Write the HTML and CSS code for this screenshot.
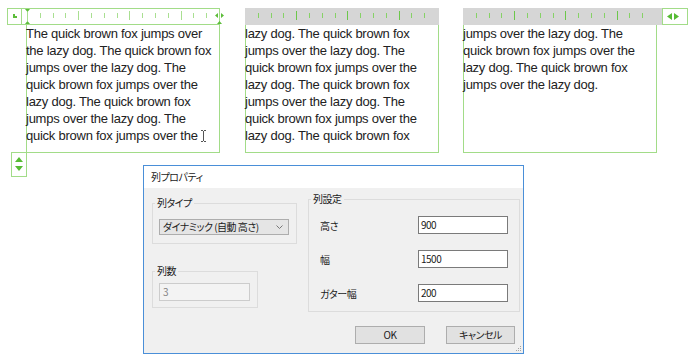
FILE: index.html
```html
<!DOCTYPE html>
<html lang="ja">
<head>
  <meta charset="UTF-8">
  <meta name="viewport" content="width=device-width, initial-scale=1.0">
  <title>列プロパティ</title>
  <link rel="stylesheet" href="styles.css">
</head>
<body>

<div class="frames">
  <div class="frame frame-first">
    <div class="ruler ruler-active">
      <div class="tab-corner"><span class="tab-mark"></span></div>
      <div class="scale">
        <svg class="ticks" width="197" height="15" viewBox="0 0 197 15">
          <g transform="translate(5 0)" stroke="#a9df91">
            <path d="M13.5 4v5M26.5 4v5M38.5 4v5M64.5 4v5M77.5 4v5M90.5 4v5M115.5 4v5M128.5 4v5M141.5 4v5M166.5 4v5M179.5 4v5"/>
            <path d="M51.5 2v9M102.5 2v9M154.5 2v9"/>
          </g>
        </svg>
        <svg class="indent-marker" width="5" height="15" viewBox="0 0 5 15">
          <path d="M0 0h5L2.5 3z M0 15h5L2.5 12z" fill="#5cbd3a"/>
          <path d="M2.5 3v9" stroke="#a9df91"/>
        </svg>
        <svg class="edge-marker" width="9" height="15" viewBox="0 0 9 15">
          <path d="M0 6.5l3-2.5v5z M9 6.5l-3-2.5v5z M2 15h5l-2.5-3z" fill="#5cbd3a"/>
        </svg>
      </div>
    </div>
    <div class="text-box">
      <div class="line">The quick brown fox jumps over</div>
      <div class="line">the lazy dog. The quick brown fox</div>
      <div class="line">jumps over the lazy dog. The</div>
      <div class="line">quick brown fox jumps over the</div>
      <div class="line">lazy dog. The quick brown fox</div>
      <div class="line">jumps over the lazy dog. The</div>
      <div class="line">quick brown fox jumps over the<svg class="caret" width="5" height="12" viewBox="0 0 5 12"><path d="M0 .5h2M3 .5h2M2.5 1v10M0 11.5h2M3 11.5h2" stroke="#555" fill="none"/></svg></div>
    </div>
  </div>

  <div class="frame frame-second">
    <div class="ruler">
      <div class="scale scale-idle">
        <svg class="ticks" width="194" height="17" viewBox="0 0 194 17">
          <g transform="translate(0 1)">
            <path d="M13.5 4v5M26.5 4v5M38.5 4v5M64.5 4v5M77.5 4v5M90.5 4v5M115.5 4v5M128.5 4v5M141.5 4v5M166.5 4v5M179.5 4v5" stroke="#86d266"/>
            <path d="M51.5 2v9M102.5 2v9M154.5 2v9" stroke="#6cc74a"/>
          </g>
        </svg>
      </div>
    </div>
    <div class="text-box">
      <div class="line">lazy dog. The quick brown fox</div>
      <div class="line">jumps over the lazy dog. The</div>
      <div class="line">quick brown fox jumps over the</div>
      <div class="line">lazy dog. The quick brown fox</div>
      <div class="line">jumps over the lazy dog. The</div>
      <div class="line">quick brown fox jumps over the</div>
      <div class="line">lazy dog. The quick brown fox</div>
    </div>
  </div>

  <div class="frame frame-third">
    <div class="ruler">
      <div class="scale scale-idle">
        <svg class="ticks" width="199" height="17" viewBox="0 0 199 17">
          <g transform="translate(0 1)">
            <path d="M13.5 4v5M26.5 4v5M38.5 4v5M64.5 4v5M77.5 4v5M90.5 4v5M115.5 4v5M128.5 4v5M141.5 4v5M166.5 4v5M179.5 4v5" stroke="#86d266"/>
            <path d="M51.5 2v9M102.5 2v9M154.5 2v9" stroke="#6cc74a"/>
          </g>
        </svg>
      </div>
      <div class="ruler-btn">
        <svg width="12" height="7" viewBox="0 0 12 7"><path d="M5 0v7L0 3.5z M7 0v7l5-3.5z" fill="#56bb34"/></svg>
      </div>
    </div>
    <div class="text-box">
      <div class="line">jumps over the lazy dog. The</div>
      <div class="line">quick brown fox jumps over the</div>
      <div class="line">lazy dog. The quick brown fox</div>
      <div class="line">jumps over the lazy dog.</div>
    </div>
  </div>
</div>

<div class="lower">
  <div class="spin">
    <svg width="8" height="14" viewBox="0 0 8 14"><path d="M0 5h8L4 0z M0 9h8l-4 5z" fill="#56bb34"/></svg>
  </div>

  <div class="dialog">
    <div class="dialog-title">列プロパティ</div>
    <div class="dialog-body">
      <div class="col-left">
        <fieldset class="group group-type">
          <legend>列タイプ</legend>
          <div class="group-inner">
            <div class="combo">
              <span>ダイナミック (自動 高さ)</span>
              <svg width="7" height="4" viewBox="0 0 7 4"><path d="M.5 .5l3 3 3-3" stroke="#777" fill="none"/></svg>
            </div>
          </div>
        </fieldset>
        <fieldset class="group group-count">
          <legend>列数</legend>
          <div class="group-inner">
            <div class="field field-disabled">3</div>
          </div>
        </fieldset>
      </div>

      <fieldset class="group group-settings">
        <legend>列設定</legend>
        <div class="group-inner">
          <div class="field-row"><span>高さ</span><div class="field">900</div></div>
          <div class="field-row"><span>幅</span><div class="field">1500</div></div>
          <div class="field-row"><span>ガター幅</span><div class="field">200</div></div>
        </div>
      </fieldset>

      <div class="dialog-buttons">
        <button class="btn btn-ok">OK</button>
        <button class="btn btn-cancel">キャンセル</button>
      </div>
    </div>
    <svg class="grip" width="5" height="5" viewBox="0 0 5 5"><path d="M4 0h1v1h-1zM2 2h1v1h-1zM4 2h1v1h-1zM0 4h1v1h-1zM2 4h1v1h-1zM4 4h1v1h-1z" fill="#a3a3a3"/></svg>
  </div>
</div>

</body>
</html>
```

FILE: styles.css
```css
body {
  margin: 0;
  background: #fff;
  font-family: "Liberation Sans", Arial, sans-serif;
}
.frames {
  display: flex;
  align-items: flex-start;
  padding-top: 8px;
}
.frame {
  display: flex;
  flex-direction: column;
}
.frame-first {
  margin-left: 7px;
  width: 213px;
}
.frame-second {
  margin-left: 25px;
  width: 194px;
}
.frame-third {
  margin-left: 24px;
  width: 225px;
}
.ruler {
  height: 17px;
  box-sizing: border-box;
  display: flex;
}
.ruler-active {
  border: 1px solid #a2dc88;
}
.tab-corner {
  width: 14px;
  box-sizing: border-box;
  border-right: 1px solid #a2dc88;
  display: flex;
  padding: 5px 0 0 5px;
}
.tab-mark {
  width: 2px;
  height: 2px;
  border-left: 2px solid #5cbd3a;
  border-bottom: 2px solid #5cbd3a;
}
.scale {
  flex: 1;
  position: relative;
}
.scale-idle {
  background: #d6d6d6;
}
.ticks {
  display: block;
}
.indent-marker {
  position: absolute;
  left: 3px;
  top: 0;
}
.edge-marker {
  position: absolute;
  right: -5px;
  top: 0;
}
.ruler-btn {
  width: 26px;
  box-sizing: border-box;
  border: 1px solid #a2dc88;
  background: #fff;
  padding: 4px 0 0 4px;
}
.ruler-btn svg {
  display: block;
}
.text-box {
  width: 194px;
  height: 128px;
  box-sizing: border-box;
  border: 1px solid #a2dc88;
  border-top: 0;
  font-size: 13px;
  line-height: 17px;
  letter-spacing: -0.25px;
  color: #222;
}
.frame-first .text-box {
  margin-left: 19px;
}
.line {
  white-space: nowrap;
  margin-left: -1px;
}
.caret {
  margin-left: 3px;
  vertical-align: -2px;
}
.lower {
  display: flex;
  align-items: flex-start;
}
.spin {
  margin: -1px 0 0 11px;
  width: 16px;
  height: 25px;
  box-sizing: border-box;
  border: 1px solid #a2dc88;
  display: flex;
  justify-content: center;
  padding-top: 4px;
}
.spin svg {
  display: block;
}

/* dialog */
.dialog {
  position: relative;
  margin: 12px 0 0 116px;
  width: 381px;
  height: 189px;
  box-sizing: border-box;
  border: 1px solid #4a8fd8;
  background: #f0f0f0;
  display: flex;
  flex-direction: column;
  font-family: "Noto Sans CJK JP", sans-serif;
  font-size: 10px;
  letter-spacing: -0.5px;
  font-feature-settings: "palt";
  color: #1a1a1a;
}
.dialog-title {
  height: 22px;
  line-height: 22px;
  padding-left: 7px;
  background: #fff;
}
.dialog-body {
  flex: 1;
  display: grid;
  grid-template-columns: 145px 212px;
  column-gap: 11px;
  align-items: start;
  align-content: start;
  padding: 4px 3px 0 8px;
}
.col-left {
  margin-top: 4px;
}
.group {
  margin: 0;
  padding: 0;
  min-width: 0;
  box-sizing: border-box;
  border: 1px solid #dcdcdc;
}
.group legend {
  margin-left: 2px;
  padding: 0 2px;
  line-height: 14px;
}
.group-type {
  width: 145px;
}
.group-type .group-inner {
  padding: 9px 7px 8px 6px;
}
.group-count {
  width: 106px;
  margin-top: 20px;
}
.group-count .group-inner {
  padding: 5px 0 6px 6px;
}
.group-settings {
  width: 212px;
}
.group-settings .group-inner {
  padding: 10px 11px 9px 11px;
}
.combo {
  width: 130px;
  height: 16px;
  box-sizing: border-box;
  border: 1px solid #adadad;
  background: #e5e5e5;
  display: flex;
  align-items: center;
  justify-content: space-between;
  padding: 0 5px 0 3px;
  line-height: 14px;
}
.combo svg {
  display: block;
}
.field {
  width: 90px;
  height: 18px;
  box-sizing: border-box;
  border: 1px solid #7a7a7a;
  background: #fff;
  padding-left: 2px;
  line-height: 16px;
}
.field-disabled {
  width: 91px;
  border-color: #cccccc;
  background: #f3f3f3;
  color: #838383;
  padding-left: 3px;
}
.field-row {
  display: flex;
  justify-content: space-between;
  align-items: center;
  height: 18px;
}
.field-row + .field-row {
  margin-top: 16px;
}
.dialog-buttons {
  grid-column: 1 / -1;
  display: flex;
  justify-content: flex-end;
  gap: 21px;
  margin: 14px 5px 0 0;
}
.btn {
  height: 18px;
  padding: 0;
  border: 1px solid #adadad;
  background: #e1e1e1;
  font: inherit;
  letter-spacing: inherit;
  font-feature-settings: inherit;
  line-height: 16px;
  color: #1a1a1a;
}
.btn-ok {
  width: 70px;
}
.btn-cancel {
  width: 69px;
}
.grip {
  position: absolute;
  right: 2px;
  bottom: 2px;
}
```
